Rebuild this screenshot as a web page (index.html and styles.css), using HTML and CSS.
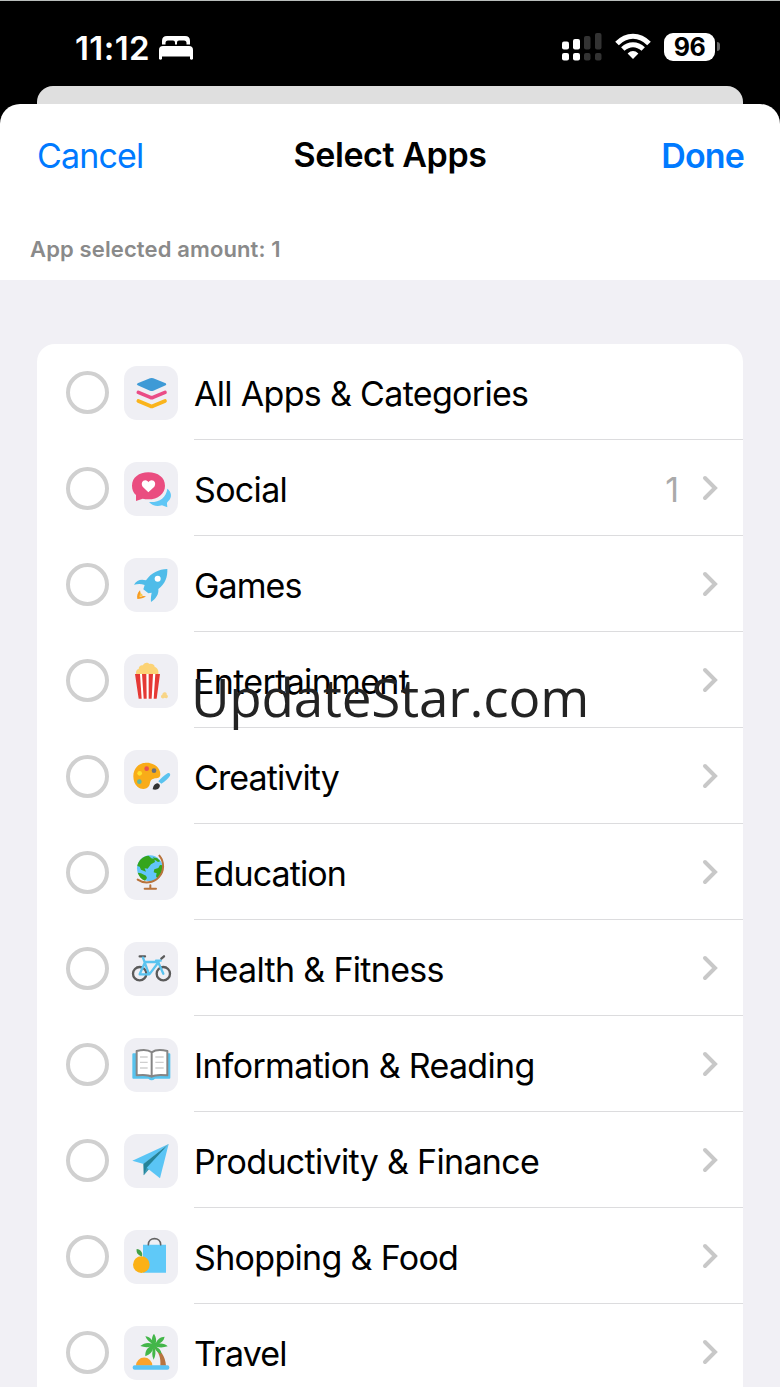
FILE: index.html
```html
<!DOCTYPE html>
<html lang="en">
  <head>
    <meta charset="utf-8">
    <title>Select Apps</title>
    <meta name="viewport" content="width=device-width,initial-scale=1">
    <link rel="stylesheet" href="styles.css">
  </head>
  <body>
    <div class="status-bar">
      <span class="time">11:12</span>
      <svg class="bed" viewBox="0 0 34 24">
        <path fill="#fff" d="M3 8.500V5q0-5 5-5h18q5 0 5 5v3.500h-3.500V7q0-2.500-2.500-2.500h-5q-2 0-2 2v2h-2v-2q0-2-2-2H9Q6.500 4.500 6.500 7v1.500z"/>
        <path fill="#fff" d="M0 23V14q0-4 4-4h26q4 0 4 4v9q-1.500 1.500-3 0v-2.500H3V23q-1.500 1.500-3 0z"/>
      </svg>
      <svg class="signal" viewBox="0 0 40 28">
        <g fill="#fff">
          <rect x="0" y="8.500" width="7" height="8" rx="2"/>
          <rect x="11" y="6" width="7" height="10.500" rx="2"/>
          <rect x="0" y="20" width="7" height="7.500" rx="2"/>
          <rect x="11" y="20" width="7" height="7.500" rx="2"/>
        </g>
        <g fill="#333">
          <rect x="22" y="3" width="6.500" height="13.500" rx="2"/>
          <rect x="33" y="0" width="6.500" height="16.500" rx="2"/>
          <rect x="22" y="20" width="6.500" height="7.500" rx="2"/>
          <rect x="33" y="20" width="6.500" height="7.500" rx="2"/>
        </g>
      </svg>
      <svg class="wifi" viewBox="0 0 36 26">
        <g fill="none" stroke="#fff" stroke-width="5">
          <path d="M2 10.500Q9 3.200 18 3.200T34 10.500"/>
          <path d="M7.800 16Q12.500 11.700 18 11.700T28.200 16"/>
        </g>
        <path fill="#fff" d="M12.600 20.400Q18 15.800 23.400 20.400L18 26z"/>
      </svg>
      <span class="battery">96</span>
      <span class="battery-cap"></span>
    </div>
    <div class="back-card"></div>
    <div class="sheet">
      <div class="nav">
        <a class="cancel">Cancel</a>
        <h1 class="title">Select Apps</h1>
        <a class="done">Done</a>
      </div>
      <p class="amount">App selected amount: 1</p>
    </div>
    <div class="content">
      <ul class="list">
        <li class="row">
          <span class="radio"></span>
          <svg class="icon" viewBox="0 0 162 162">
            <path fill="#3e9ad6" d="M78 37q5-2 10 0l37 15q4 3 0 6L88 74q-5 2-10 0L41 58q-5-3 0-6z"/>
            <path class="line" stroke="#ea4d86" stroke-width="11" d="M43 79l36 15q4 2 8 0l36-15"/>
            <path class="line" stroke="#fab41c" stroke-width="11" d="M43 105l36 15q4 2 8 0l36-15"/>
          </svg>
          <div class="cell"><span class="label">All Apps &amp; Categories</span></div>
        </li>
        <li class="row">
          <span class="radio"></span>
          <svg class="icon" viewBox="0 0 162 162">
            <path fill="#5fc6f5" d="M130 80c13 10 15 26 3 37-3 3-4 5-4 8l1 11-16-6c-16 4-29 1-39-10 31 2 51-12 55-40z"/>
            <path fill="#ea4d80" d="M73 31c29 0 50 16 50 40s-21 41-50 41c-6 0-12-1-17-2l-20 7v-18C28 92 24 82 24 71c0-24 21-40 49-40z"/>
            <path fill="#fff" d="M73 91L56 74c-6-9-1-19 8-19 5 0 8 3 9 6 2-3 5-6 10-6 9 0 14 10 8 19z"/>
          </svg>
          <div class="cell">
            <span class="label">Social</span>
            <span class="count">1</span>
            <svg class="chevron" viewBox="0 0 16 26"><path d="M3 3l10 10L3 23"/></svg>
          </div>
        </li>
        <li class="row">
          <span class="radio"></span>
          <svg class="icon" viewBox="0 0 162 162">
            <path fill="#4fbce9" d="M130 33c1 23-6 45-27 60 2 16-8 30-22 39-1-9 0-19 2-28l-10 2-15-12 4-13c-10-4-20-4-32-1 8-13 20-18 36-13C82 44 104 34 130 33z"/>
            <circle fill="#fff" cx="101" cy="62" r="9"/>
            <path fill="#f79b22" d="M48 97c-8 8-10 17-8 26 10 0 19-2 26-8l-9-1-9 3 2-10z"/>
            <path fill="#fdc84a" d="M49 104l-4 14 12-6z"/>
          </svg>
          <div class="cell">
            <span class="label tight">Games</span>
            <svg class="chevron" viewBox="0 0 16 26"><path d="M3 3l10 10L3 23"/></svg>
          </div>
        </li>
        <li class="row">
          <span class="radio"></span>
          <svg class="icon" viewBox="0 0 162 162">
            <path fill="#fcd375" d="M37 62c-3-9 1-16 7-17 0-8 7-13 13-11 2-9 15-10 19-4 9-2 17 4 16 9 9 2 13 12 11 23z"/>
            <path fill="#fff" d="M34 60h73l-9 74H44z"/>
            <path fill="#e53935" d="M33 60h15l5 74h-9zM54 60h13l1 74h-9zM74 60h13l-4 74h-9zM94 60h14l-10 74h-9z"/>
            <path fill="#f8d586" d="M111 130c-1-5 2-7 4-8 0-5 4-8 8-7 4 0 6 3 5 7 4 1 5 6 2 9-3 3-6 1-8 0-4 3-9 3-11-1z"/>
          </svg>
          <div class="cell">
            <span class="label">Entertainment</span>
            <svg class="chevron" viewBox="0 0 16 26"><path d="M3 3l10 10L3 23"/></svg>
          </div>
        </li>
        <li class="row">
          <span class="radio"></span>
          <svg class="icon" viewBox="0 0 162 162">
            <path fill="#f9ac18" d="M65 38c25-1 44 15 44 34 0 14-9 11-20 14-14 4-9 14-14 22-7 11-24 11-34 3-9-7-13-20-13-32 0-24 16-40 37-41z"/>
            <circle fill="#e9534f" cx="68" cy="56" r="7"/>
            <circle fill="#6d7178" cx="90" cy="62" r="7"/>
            <circle fill="#ffe02b" cx="47" cy="70" r="7"/>
            <circle fill="#62b6a0" cx="46" cy="95" r="7"/>
            <path fill="#5ac3ef" d="M103 94c8-10 18-19 29-25 5-1 8 3 6 8-6 9-15 17-26 24z"/>
            <path fill="#333" d="M86 118c2-9 5-17 14-18 8 1 10 9 5 14-4 5-11 6-19 4z"/>
          </svg>
          <div class="cell">
            <span class="label tight">Creativity</span>
            <svg class="chevron" viewBox="0 0 16 26"><path d="M3 3l10 10L3 23"/></svg>
          </div>
        </li>
        <li class="row">
          <span class="radio"></span>
          <svg class="icon" viewBox="0 0 162 162">
            <circle fill="#62c5fa" cx="78" cy="67" r="39"/>
            <path fill="#35a51b" d="M40 60c3-16 16-30 34-31l8 8 9 2 2 9-12 7-10 13-9-1 4 10-15-6-4-9zM86 34l14 3 9 9-7 2-10-7zM41 80l10 2 15 7 3 7-6 8c-11-4-18-13-22-24zM116 58c3 16-3 31-15 40l-5-7 2-9-9-3 2-9 12-4 5-9z"/>
            <path class="line" stroke="#b8733c" stroke-width="6" d="M106 29a49 49 0 0 1-65 72"/>
            <path class="line" stroke="#b8733c" stroke-width="6" d="M79 118v9M62 128h34"/>
          </svg>
          <div class="cell">
            <span class="label tight">Education</span>
            <svg class="chevron" viewBox="0 0 16 26"><path d="M3 3l10 10L3 23"/></svg>
          </div>
        </li>
        <li class="row">
          <span class="radio"></span>
          <svg class="icon" viewBox="0 0 162 162">
            <g class="line" stroke="#5b5b5b" stroke-width="7">
              <circle cx="47" cy="95" r="20"/>
              <circle cx="118" cy="95" r="20"/>
              <path d="M47 43h16M112 50l8-7"/>
            </g>
            <g class="line" stroke="#5ac3ef" stroke-width="7">
              <path d="M57 47l18 50M62 60h42L76 97H47L62 63M96 56h14M101 57l17 38"/>
            </g>
          </svg>
          <div class="cell">
            <span class="label">Health &amp; Fitness</span>
            <svg class="chevron" viewBox="0 0 16 26"><path d="M3 3l10 10L3 23"/></svg>
          </div>
        </li>
        <li class="row">
          <span class="radio"></span>
          <svg class="icon" viewBox="0 0 162 162">
            <path fill="#57c3ee" d="M28 46h108q3 0 3 3v70q0 3-3 3H93q-10 9-20 0H28q-3 0-3-3V49q0-3 3-3z"/>
            <path fill="#fff" stroke="#858585" stroke-width="6" stroke-linejoin="round" d="M83 43c-10-8-29-8-45-4v73c17-2 34-3 45 4 11-7 29-6 47-4V39c-17-4-36-4-47 4zv73"/>
            <path stroke="#cfcfcf" stroke-width="4" d="M48 57h23M48 73h23M48 90h23M94 57h25M94 73h25M94 90h25"/>
          </svg>
          <div class="cell">
            <span class="label">Information &amp; Reading</span>
            <svg class="chevron" viewBox="0 0 16 26"><path d="M3 3l10 10L3 23"/></svg>
          </div>
        </li>
        <li class="row">
          <span class="radio"></span>
          <svg class="icon" viewBox="0 0 162 162">
            <path fill="#5ac5f5" d="M134 30L25 80l34 10z"/>
            <path fill="#258399" d="M134 30L58 90l1 34z"/>
            <path fill="#3f9cb5" d="M59 124l16-18-7-5z"/>
            <path fill="#5ac5f5" d="M134 30L68 101l40 32z"/>
          </svg>
          <div class="cell">
            <span class="label">Productivity &amp; Finance</span>
            <svg class="chevron" viewBox="0 0 16 26"><path d="M3 3l10 10L3 23"/></svg>
          </div>
        </li>
        <li class="row">
          <span class="radio"></span>
          <svg class="icon" viewBox="0 0 162 162">
            <path fill="#5fc9f8" d="M57 44h69v84H57z"/>
            <path class="line" stroke="#646464" stroke-width="5" d="M73 44c0-24 37-24 37 0"/>
            <circle fill="#fbb116" cx="52" cy="104" r="25"/>
            <path fill="#43a047" d="M54 79c-12-3-18-11-16-22 12 2 19 10 16 22z"/>
          </svg>
          <div class="cell">
            <span class="label">Shopping &amp; Food</span>
            <svg class="chevron" viewBox="0 0 16 26"><path d="M3 3l10 10L3 23"/></svg>
          </div>
        </li>
        <li class="row">
          <span class="radio"></span>
          <svg class="icon" viewBox="0 0 162 162">
            <path fill="#f9a32b" d="M36 119a24 24 0 0 1 49 0z"/>
            <path fill="#b87440" d="M91 61c18 10 33 30 35 58h-17c2-25-5-40-18-52z"/>
            <path fill="#43b649" d="M91 58c-8-11-10-23-1-35 7 12 8 20 5 29 6-13 14-19 27-20-3 13-11 20-22 22 13-3 23-1 31 7-13 4-24 4-34 1 10 5 15 12 15 22-11-4-18-11-20-20 4 13 3 26-3 37-6-11-5-23-1-34-3 11-10 19-24 24-1-16 6-26 18-30-11 4-22 3-33-1 11-10 24-11 35-7-9-6-16-12-20-22 13 2 22 9 27 27z"/>
            <rect fill="#5ac3f5" x="26" y="118" width="110" height="13" rx="6"/>
          </svg>
          <div class="cell">
            <span class="label tight">Travel</span>
            <svg class="chevron" viewBox="0 0 16 26"><path d="M3 3l10 10L3 23"/></svg>
          </div>
        </li>
      </ul>
    </div>
    <div class="watermark">UpdateStar.com</div>
  </body>
</html>
```
FILE: styles.css
```css
* {
  box-sizing: border-box;
}

body {
  position: relative;
  height: 1387px;
  margin: 0;
  overflow: hidden;
  background: #000;
  color: #000;
  font-family: Inter, "Liberation Sans", sans-serif;
}

.status-bar {
  display: flex;
  height: 86px;
  padding: 32px 60px 0 75px;
  border-top: 1px solid #b9bdbb;
  color: #fff;
}

.time {
  width: 84px;
  font-size: 33px;
  font-weight: 600;
  line-height: 31px;
  letter-spacing: 0.4px;
}

.bed {
  width: 34px;
  height: 24px;
  margin-top: 3px;
}

.signal {
  width: 40px;
  height: 28px;
  margin-left: auto;
}

.wifi {
  width: 36px;
  height: 26px;
  margin: 0 13px;
}

.battery {
  width: 51px;
  height: 28px;
  border-radius: 9px;
  background: #fff;
  color: #000;
  font-size: 25px;
  font-weight: 700;
  line-height: 28px;
  letter-spacing: -0.5px;
  text-align: center;
}

.battery-cap {
  width: 3px;
  height: 9px;
  margin: 9px 0 0 2px;
  border-radius: 0 4px 4px 0;
  background: #666;
}

.back-card {
  height: 40px;
  margin: 0 37px -22px;
  border-radius: 16px 16px 0 0;
  background: #dfdfdf;
}

.sheet {
  position: relative;
  height: 176px;
  border-radius: 20px 20px 0 0;
  background: #fff;
}

.nav {
  display: grid;
  grid-template-columns: 1fr auto 1fr;
  padding: 31px 37px 0;
  font-size: 34px;
  line-height: 40px;
}

.cancel,
.done {
  padding-top: 1px;
  color: #007aff;
  letter-spacing: -0.85px;
}

.done {
  margin-right: -1px;
  font-weight: 600;
  text-align: right;
}

.title {
  margin: 0;
  font-size: 34px;
  font-weight: 600;
  letter-spacing: -0.4px;
}

.amount {
  margin: 59px 0 0 30px;
  color: #8a8a8a;
  font-size: 22px;
  font-weight: 600;
  line-height: 28px;
  letter-spacing: 0.13px;
}

.content {
  height: 1107px;
  padding: 64px 37px 0;
  background: #f1f0f5;
}

.list {
  margin: 0;
  padding: 0;
  border-radius: 18px 18px 0 0;
  background: #fff;
  list-style: none;
}

.row {
  display: flex;
  height: 96px;
  padding-left: 29px;
}

.radio {
  width: 43px;
  height: 43px;
  margin: 27px 15px 0 0;
  border: 4px solid #d0d0d0;
  border-radius: 50%;
}

.icon {
  width: 54px;
  height: 54px;
  margin: 22px 16px 0 0;
  border-radius: 13px;
  background: #efeff4;
}

.line {
  fill: none;
  stroke-linecap: round;
  stroke-linejoin: round;
}

.cell {
  display: flex;
  flex: 1;
  align-items: center;
  padding: 4px 25px 0 0;
  border-bottom: 1px solid #dcdcde;
}

.label {
  flex: 1;
  font-size: 34px;
  line-height: 40px;
  letter-spacing: -0.68px;
  white-space: nowrap;
}

.label.tight {
  letter-spacing: -0.9px;
}

.count {
  margin-right: 23px;
  color: #aaa;
  font-size: 34px;
}

.chevron {
  width: 16px;
  height: 26px;
  margin-top: -3px;
  fill: none;
  stroke: #c8c8c8;
  stroke-width: 4;
  stroke-linecap: round;
}

/* overlaid across the middle of the page */
.watermark {
  position: absolute;
  top: 660px;
  left: 0;
  width: 780px;
  color: #232323;
  font-family: "Open Sans", "Noto Sans", sans-serif;
  font-size: 53px;
  line-height: 74px;
  letter-spacing: -0.2px;
  text-align: center;
}
```
